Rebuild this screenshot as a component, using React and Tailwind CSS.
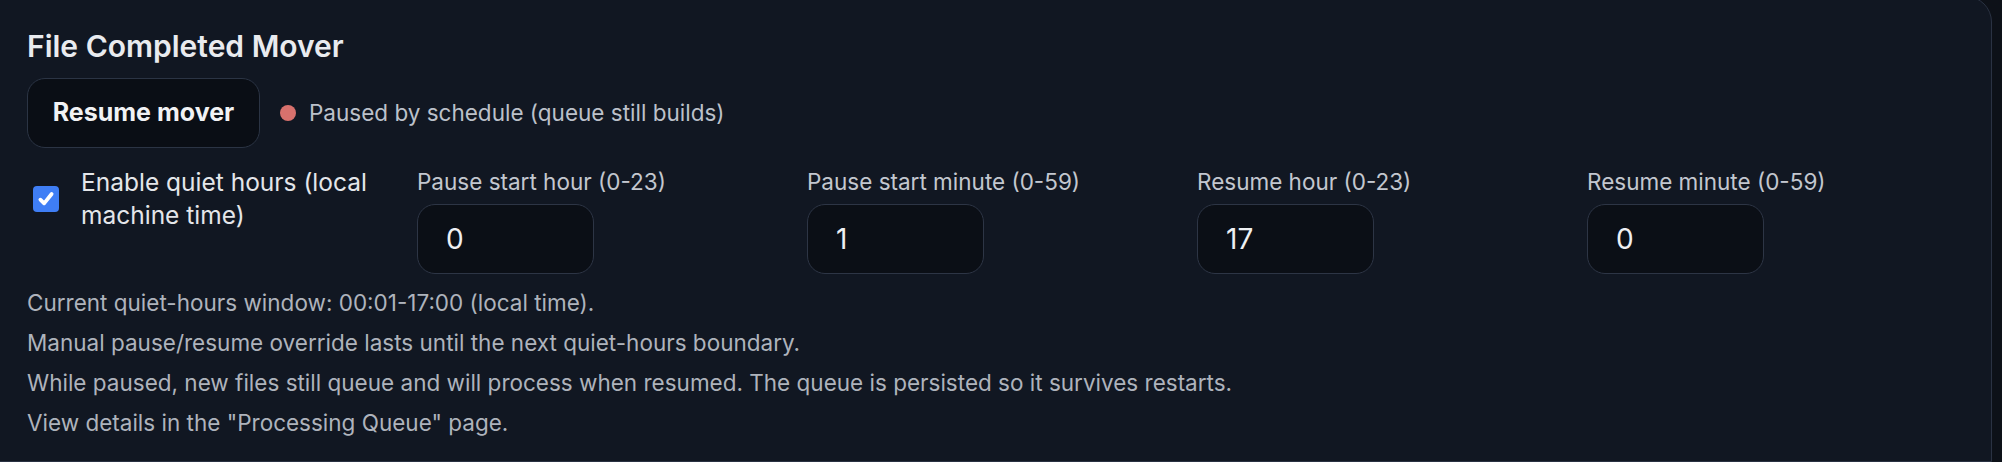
import React from 'react';

const fields = [
  { label: 'Pause start hour (0-23)', value: '0' },
  { label: 'Pause start minute (0-59)', value: '1' },
  { label: 'Resume hour (0-23)', value: '17' },
  { label: 'Resume minute (0-59)', value: '0' },
];

const notes = [
  'Current quiet-hours window: 00:01-17:00 (local time).',
  'Manual pause/resume override lasts until the next quiet-hours boundary.',
  'While paused, new files still queue and will process when resumed. The queue is persisted so it survives restarts.',
  'View details in the "Processing Queue" page.',
];

function NumberField({ label, value }) {
  return (
    <div className="flex flex-col pt-[4px]">
      <label className="text-[22.5px] leading-[24px] text-[#c3c7cf]">{label}</label>
      <input
        type="text"
        defaultValue={value}
        className="mt-[10px] w-[177px] h-[70px] rounded-[18px] border border-[#2d3545] bg-[#0b0f16] px-[28px] text-[28px] text-[#eef0f3] outline-none"
      />
    </div>
  );
}

export default function App() {
  return (
    <div className="w-[2002px] h-[462px] overflow-hidden bg-[#0d1118] font-['Inter','Noto_Sans',sans-serif]">
      <div className="-ml-[2px] -mt-[4px] w-[1994px] h-[466px] rounded-tr-[26px] border border-[#2a3242] bg-[#111722] pl-[28px] pr-[26px] pt-[32px]">
        <h2 className="text-[30px] leading-[34px] font-semibold text-[#e9ebef]">File Completed Mover</h2>

        <div className="mt-[15px] flex items-center">
          <button className="w-[233px] h-[70px] rounded-[18px] border border-[#2b3444] bg-[#0a0e15] text-[25px] font-bold text-[#f1f2f4]">
            Resume mover
          </button>
          <span className="ml-[20px] w-[16px] h-[16px] rounded-full bg-[#d8716d]" />
          <span className="ml-[13px] text-[22.5px] text-[#bcc1ca]">Paused by schedule (queue still builds)</span>
        </div>

        <div className="mt-[18px] grid grid-cols-[repeat(5,378px)] gap-x-[12px] items-start">
          <label className="flex items-center pl-[6px]">
            <span className="w-[26px] h-[26px] shrink-0 rounded-[4px] bg-[#3f7ef5] flex items-center justify-center">
              <svg viewBox="0 0 16 16" className="w-[20px] h-[20px]" fill="none" stroke="white" strokeWidth="3" strokeLinecap="round" strokeLinejoin="round">
                <path d="M3.5 8.5l3 3 6-7.5" />
              </svg>
            </span>
            <span className="ml-[22px] text-[24.5px] leading-[33px] text-[#e4e6ea]">
              Enable quiet hours (local machine time)
            </span>
          </label>
          {fields.map((f) => (
            <NumberField key={f.label} label={f.label} value={f.value} />
          ))}
        </div>

        <div className="mt-[9px] flex flex-col">
          {notes.map((n) => (
            <p key={n} className="text-[22.5px] leading-[40px] text-[#aeb3bc]">{n}</p>
          ))}
        </div>
      </div>
    </div>
  );
}
